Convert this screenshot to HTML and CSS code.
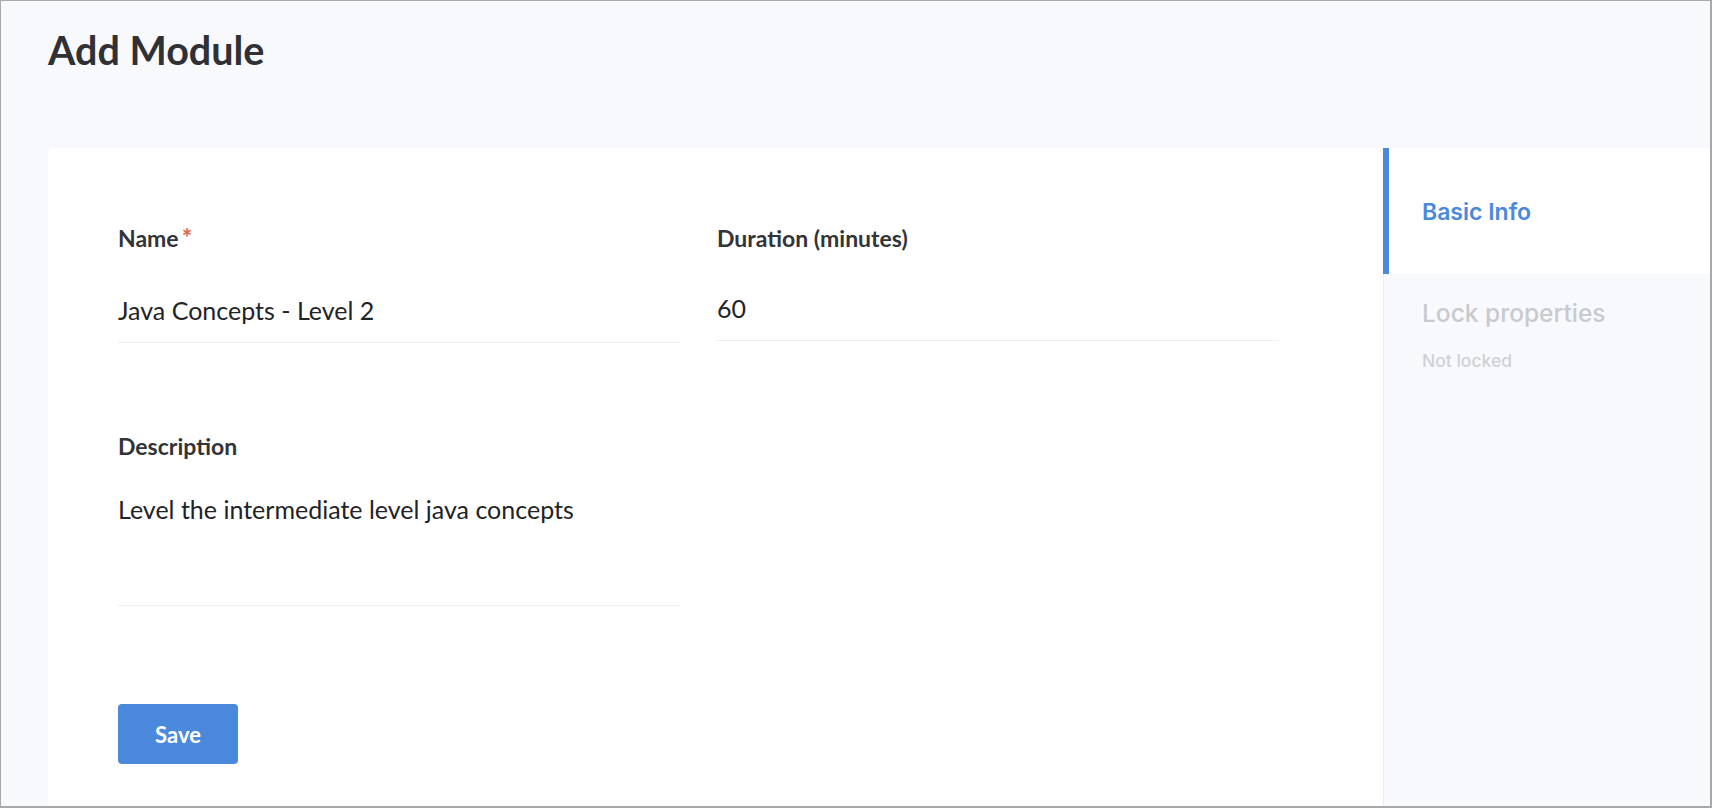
FILE: index.html
```html
<!DOCTYPE html>
<html>
<head>
    <meta charset="utf-8">
    <link rel="stylesheet" href="styles.css">
    <title>Add Module</title>
</head>
<body>
    <div class="frame">

        <div class="pageHead">
            <h1 class="title">Add Module</h1>
        </div>

        <div class="card">

            <div class="form">

                <div class="row">
                    <div class="field">
                        <p class="label">Name<span class="req">*</span></p>
                        <div class="input">Java Concepts - Level 2</div>
                    </div>
                    <div class="field">
                        <p class="label">Duration (minutes)</p>
                        <div class="input inputShort">60</div>
                    </div>
                </div>

                <div class="row rowDesc">
                    <div class="field">
                        <p class="label">Description</p>
                        <div class="input textArea">Level the intermediate level java concepts</div>
                    </div>
                </div>

                <button class="saveBtn">Save</button>
            </div>

            <!-- side tabs -->
            <div class="side">
                <div class="tab tabActive">Basic Info</div>
                <div class="tab">
                    <p class="tabTitle">Lock properties</p>
                    <p class="tabSub">Not locked</p>
                </div>
            </div>

        </div>
    </div>
</body>
</html>
```

FILE: styles.css
```css
body{
    margin: 0;
    font-family: Lato, "Liberation Sans", sans-serif;
}

.frame{
    width: 1712px;
    height: 808px;
    box-sizing: border-box;
    border: 1px solid #a8a8a8;
    border-right-width: 2px;
    border-bottom-width: 2px;
    background-color: #f8f9fc;

    display: flex;
    flex-direction: column;
}

.pageHead{
    height: 147px;
    box-sizing: border-box;
    padding: 25px 0 0 47px;
}

.title{
    margin: 0;
    font-size: 39.5px;
    line-height: 48px;
    font-weight: bold;
    color: #2f3136;
}

.card{
    flex: 1;
    margin-left: 47px;
    background-color: white;
    border-top-left-radius: 6px;
    display: flex;
}

.form{
    width: 1335px;
    box-sizing: border-box;
    padding: 77px 0 0 70px;
    display: flex;
    flex-direction: column;
    align-items: flex-start;
}

.row{
    display: flex;
    gap: 37px;
}

.rowDesc{
    margin-top: 90px;
}

.field{
    width: 562px;
}

.label{
    margin: 0;
    font-size: 23px;
    line-height: 1.2;
    font-weight: bold;
    color: #333438;
}

.req{
    margin-left: 3px;
    font-size: 25px;
    line-height: 0;
    color: #e8604c;
}

.input{
    margin-top: 42px;
    padding-bottom: 17px;
    font-size: 25px;
    line-height: 1.2;
    color: #222326;
    border-bottom: 1px solid #eceef1;
}

.inputShort{
    margin-top: 40px;
}

.textArea{
    margin-top: 34px;
    padding-bottom: 81px;
}

.saveBtn{
    margin-top: 98px;
    width: 120px;
    height: 60px;
    border: none;
    border-radius: 4px;
    background-color: #4a89dc;
    color: white;
    font-family: Lato, "Liberation Sans", sans-serif;
    font-size: 22px;
    font-weight: bold;
    cursor: pointer;
}

.side{
    flex: 1;
    background-color: #f8f9fc;
    border-left: 1px solid #eceef1;
    font-family: Inter, "Noto Sans", sans-serif;
}

.tab{
    padding: 25px 0 0 38px;
}

.tabActive{
    height: 126px;
    box-sizing: border-box;
    margin-left: -1px;
    padding: 51px 0 0 33px;
    border-left: 6px solid #4a89dc;
    background-color: white;
    font-size: 23px;
    line-height: 1.2;
    font-weight: 600;
    color: #4a89dc;
}

.tabTitle{
    margin: 0;
    font-size: 24.5px;
    line-height: 1.2;
    font-weight: 500;
    color: #c8cace;
}

.tabSub{
    margin: 22px 0 0;
    font-size: 17.5px;
    line-height: 1.2;
    font-weight: 500;
    color: #cfd1d5;
}
```
